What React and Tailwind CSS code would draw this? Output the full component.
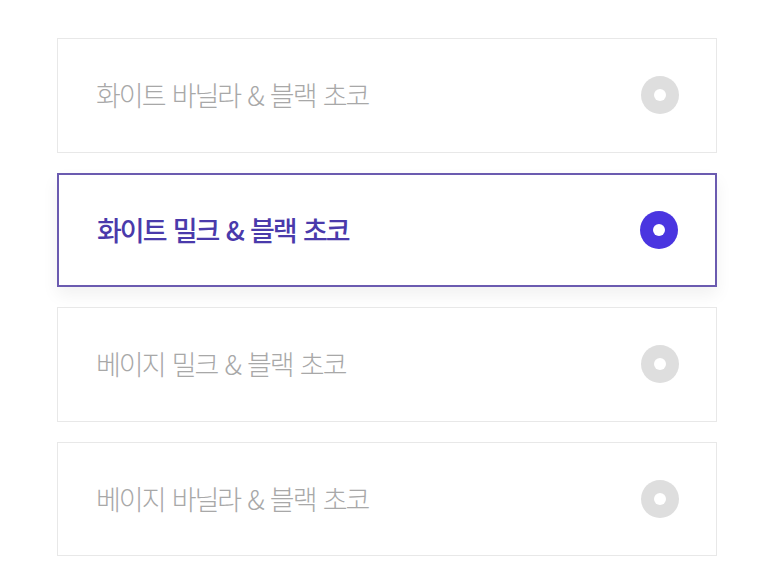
import React, { useState } from "react";

const options = [
  "화이트 바닐라 & 블랙 초코",
  "화이트 밀크 & 블랙 초코",
  "베이지 밀크 & 블랙 초코",
  "베이지 바닐라 & 블랙 초코",
];

function Radio({ active }) {
  return (
    <div
      className={`w-[38px] h-[38px] rounded-full flex items-center justify-center ${
        active ? "bg-[#4a35e0]" : "bg-[#dedede]"
      }`}
    >
      <div className="w-[12px] h-[12px] rounded-full bg-white" />
    </div>
  );
}

export default function App() {
  const [selected, setSelected] = useState(1);

  return (
    <div className="w-[773px] h-[583px] bg-white pt-[38px] pl-[57px] pr-[56px] flex flex-col gap-[20px]">
      {options.map((label, i) => {
        const active = i === selected;
        return (
          <div
            key={label}
            onClick={() => setSelected(i)}
            className={`h-[114.5px] flex items-center justify-between pl-[38px] pr-[37px] cursor-pointer bg-white border-solid ${
              active
                ? "border-2 border-[#6b5bb0] shadow-[0_8px_16px_rgba(0,0,0,0.06)]"
                : "border border-[#e8e8e8]"
            }`}
          >
            <div
              className={`text-[27px] tracking-[-0.075em] [word-spacing:0.12em] ${
                active ? "text-[#4a3aab] font-medium" : "text-[#a8a8a8] font-light"
              }`}
              style={{ fontFamily: '"Noto Sans CJK KR", "Noto Sans", sans-serif' }}
            >
              {label}
            </div>
            <Radio active={active} />
          </div>
        );
      })}
    </div>
  );
}
